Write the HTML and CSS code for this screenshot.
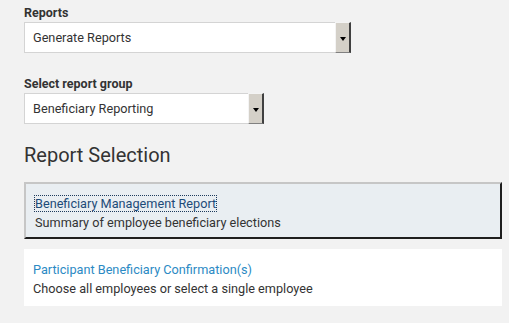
FILE: index.html
```html
<!DOCTYPE html>
<html lang="en">

<head>
    <meta charset="UTF-8">
    <meta name="viewport" content="width=device-width, initial-scale=1.0">
    <link rel="stylesheet" href="styles.css">
</head>

<body>
    <div class="page">
        <div class="field">
            <label class="field-label">Reports</label>
            <div class="select select-wide">
                <div class="select-value">Generate Reports</div>
                <div class="select-btn"><span class="arrow"></span></div>
            </div>
        </div>

        <div class="field">
            <label class="field-label">Select report group</label>
            <div class="select select-narrow">
                <div class="select-value">Beneficiary Reporting</div>
                <div class="select-btn"><span class="arrow"></span></div>
            </div>
        </div>

        <h2 class="section-title">Report Selection</h2>

        <div class="report-list">
            <div class="report-item selected">
                <a href="#" class="report-link focused">Beneficiary Management Report</a>
                <div class="report-desc">Summary of employee beneficiary elections</div>
            </div>
            <div class="report-item">
                <a href="#" class="report-link">Participant Beneficiary Confirmation(s)</a>
                <div class="report-desc">Choose all employees or select a single employee</div>
            </div>
        </div>
    </div>
</body>

</html>
```

FILE: styles.css
```css
/* page layout */
body {
    margin: 0;
    background-color: #f2f2f2;
    font-family: Roboto, "Liberation Sans", sans-serif;
    color: #333;
}

.page {
    padding: 5px 0 0 24px;
    width: 478px;
}

.field {
    margin-bottom: 23px;
}

.field-label {
    display: block;
    font-size: 12.5px;
    font-weight: bold;
    line-height: 16px;
    margin-bottom: 1px;
    color: #333;
}

/* fake select boxes */
.select {
    display: flex;
    height: 31px;
    box-sizing: border-box;
}

.select-wide {
    width: 327px;
}

.select-narrow {
    width: 240px;
}

.select-value {
    flex: 1;
    display: flex;
    align-items: center;
    padding-left: 8px;
    font-size: 12.7px;
    background-color: #fff;
    border: 1px solid #d4d4d4;
    border-right: 0;
}

.select-btn {
    width: 13px;
    display: flex;
    align-items: center;
    justify-content: center;
    background-color: #d4d0c8;
    border-top: 1px solid #f4f4f4;
    border-left: 1px solid #f4f4f4;
    border-bottom: 1px solid #808080;
    border-right: 2px solid #404040;
}

.arrow {
    width: 0;
    height: 0;
    margin-top: 2px;
    border-left: 3.5px solid transparent;
    border-right: 3.5px solid transparent;
    border-top: 4px solid #000;
}

.section-title {
    font-size: 20px;
    font-weight: normal;
    line-height: 24px;
    margin: -4px 0 15px 0;
    color: #333;
}

/* report cards */
.report-item {
    background-color: #fff;
    padding: 11px 9px 8px 9px;
    margin-bottom: 10px;
    font-size: 12.7px;
    line-height: 19px;
}

.report-item.selected {
    background-color: #e9eef2;
    border: 2px solid;
    border-color: #c6c6c6 #1e1e1e #1e1e1e #c6c6c6;
    padding: 10px 9px 5px 9px;
}

.report-link {
    color: #2b8ac4;
    text-decoration: none;
}

.selected .report-link {
    color: #1d4b78;
}

.report-link.focused {
    outline: 1px dotted #1d3a5c;
}

.report-desc {
    color: #333;
}
```
